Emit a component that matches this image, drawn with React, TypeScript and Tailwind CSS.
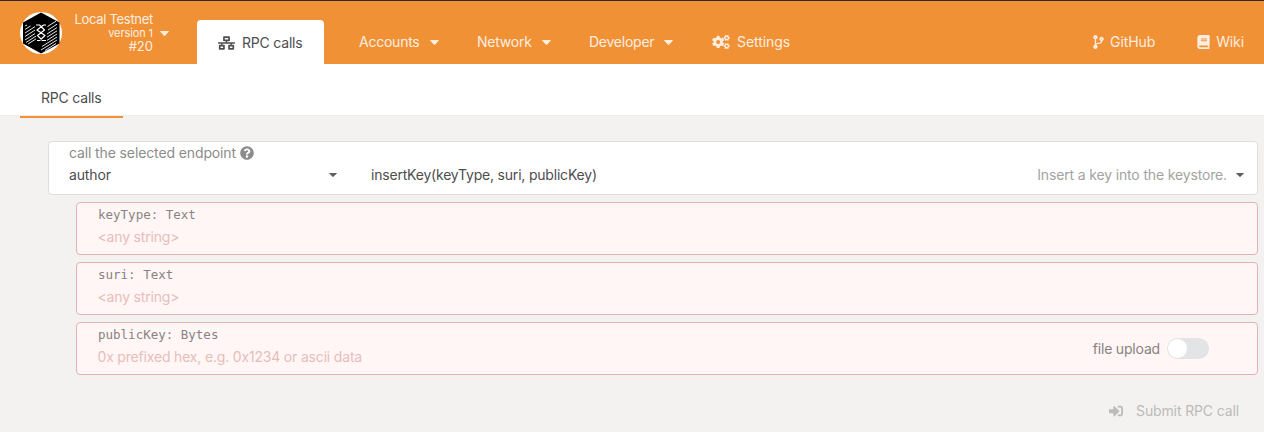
import React from 'react';
import {
  FaBook,
  FaCodeBranch,
  FaCogs,
  FaNetworkWired,
  FaQuestionCircle,
  FaSignInAlt,
} from 'react-icons/fa';

function Caret({ className }: { className: string }) {
  return (
    <svg viewBox="0 0 10 5" preserveAspectRatio="none" className={className} fill="currentColor">
      <path d="M.6 0h8.8q.8.1.3.7L5.5 4.7q-.5.5-1 0L.3.7Q-.2.1.6 0z" />
    </svg>
  );
}

function Logo() {
  return (
    <svg viewBox="0 0 42 42" className="h-[42px] w-[42px] shrink-0">
      <circle cx="21" cy="21" r="21" fill="#fff" />
      <path d="M21 .5 39.500 10.500v21L21 41.500 3 31.500v-21z" fill="#000" />
      <path
        d="M5 14l2-1M5 17.500l5.500-3.500M5 21l10-6.400M5 24.500l10-6.400M5 28l10-6.400M6 30.500l10-6.400M8 32l8-5.100M27.500 14.500l8.500-5.300M28 18l9-5.800M27 22l10-6.400M27 25.200l10-6.400M27 28.400l10-6.400M22 34.500l15-9.500M21 38l16-10M25 38.500l11-7"
        stroke="#fff"
        strokeWidth=".9"
        fill="none"
      />
      <path
        d="M16 13h3.500l5 5-7 5.500 5 5h3.500M26 13h-2.500l-6.500 5 8 5.500-5.500 5H17"
        stroke="#fff"
        strokeWidth="1.200"
        strokeLinejoin="round"
        fill="none"
      />
    </svg>
  );
}

function Menu({ label, className }: { label: string; className: string }) {
  return (
    <div className={`flex shrink-0 items-center gap-[10px] ${className}`}>
      <span className="tracking-[-0.24px]">{label}</span>
      <Caret className="mt-px h-[5px] w-[9px]" />
    </div>
  );
}

function Param({ name, hint, children }: { name: string; hint: string; children?: React.ReactNode }) {
  return (
    <div className="flex h-[53px] items-center justify-between rounded border border-[#e0b4b4] bg-[#fff6f5] pr-12 pl-[20px]">
      <div className="self-start">
        <div className="mt-[2px] ml-px h-[20px] font-['DejaVu_Sans_Mono',monospace] text-[12.500px] leading-[20px] text-[#878382]">
          {name}
        </div>
        <div className="mt-[2px] ml-[0.5px] leading-5 tracking-[-0.18px] text-[#e7bdbc]">{hint}</div>
      </div>
      {children}
    </div>
  );
}

export default function App() {
  return (
    <div className="h-[432px] w-[1264px] overflow-hidden bg-[#f3f2f0] font-[Inter,sans-serif] text-[14px] leading-5 text-[#4e4e4e]">
      <header className="flex h-16 border-t border-[#2c2930] bg-[#f19135] text-[#fdeee1]">
        <div className="flex w-[197px] shrink-0 pt-[11px] pl-5">
          <Logo />
          <div className="w-[91px] text-right text-[13px]">
            <div className="h-[14px] leading-[14px] tracking-[-0.3px]">Local Testnet</div>
            <div className="h-[13px] text-[11px] leading-[15px] tracking-[-0.1px]">version 1</div>
            <div className="leading-[14px]">#20</div>
          </div>
          <Caret className="mt-[19px] ml-[7px] h-[5px] w-[9px]" />
        </div>
        <div className="mt-[19px] flex h-[44px] w-[127px] shrink-0 items-center rounded-t bg-white pt-[2px] pl-[21px] text-[#4e4e4e]">
          <FaNetworkWired className="mr-[7px] h-[14px] w-[17px]" />
          <span className="tracking-[-0.2px]">RPC calls</span>
        </div>
        <nav className="flex flex-1 items-center pt-[19px] pl-[35px]">
          <Menu label="Accounts" className="w-[118px]" />
          <Menu label="Network" className="w-[112px]" />
          <Menu label="Developer" className="w-[123px]" />
          <div className="flex items-center gap-[7px]">
            <FaCogs className="h-[14px] w-[18px]" />
            <span className="tracking-[-0.05px]">Settings</span>
          </div>
          <div className="mr-5 ml-auto flex items-center tracking-[-0.1px]">
            <FaCodeBranch className="mr-[6px] h-[14px] w-[11px]" />
            <span>GitHub</span>
            <FaBook className="mr-[6px] ml-[42px] h-[14px] w-[13px]" />
            <span>Wiki</span>
          </div>
        </nav>
      </header>
      <div className="h-[52px] border-b border-[#ececeb] bg-white pl-5">
        <div className="h-[54px] w-[103px] border-b-2 border-[#f19135] pt-6 pl-[21px] tracking-[-0.2px]">
          RPC calls
        </div>
      </div>
      <main className="pt-[25px] pr-[6px] pl-12">
        <section className="h-[54px] rounded border border-[#dededf] bg-white pl-[20px]">
          <div className="mt-px flex items-center gap-1 text-[#8c8c8c]">
            <span className="tracking-[-0.12px]">call the selected endpoint</span>
            <FaQuestionCircle className="h-[14px] w-[14px]" />
          </div>
          <div className="mt-[2px] flex items-center pr-[13px]">
            <div className="flex w-[302px] items-center justify-between pr-[34px]">
              <span className="tracking-[-0.15px]">author</span>
              <Caret className="h-1 w-2 text-[#5f5f5f]" />
            </div>
            <span className="tracking-[-0.2px]">insertKey(keyType, suri, publicKey)</span>
            <span className="mr-[9px] ml-auto tracking-[-0.15px] text-[#a3a3a3]">
              Insert a key into the keystore.
            </span>
            <Caret className="h-1 w-2 text-[#5f5f5f]" />
          </div>
        </section>
        <div className="mt-[7px] ml-7 flex flex-col gap-[7px]">
          <Param name="keyType: Text" hint="<any string>" />
          <Param name="suri: Text" hint="<any string>" />
          <Param name="publicKey: Bytes" hint="0x prefixed hex, e.g. 0x1234 or ascii data">
            <div className="flex items-center gap-[7px] text-[#878382]">
              <span className="tracking-[-0.18px]">file upload</span>
              <div className="h-[21px] w-[42px] rounded-full bg-[#e2e4e5] p-px">
                <div className="h-[19px] w-[19px] rounded-full bg-white" />
              </div>
            </div>
          </Param>
        </div>
        <div className="mt-[26px] flex items-center justify-end gap-[13px] pr-[19px] text-[#bcbbb9]">
          <FaSignInAlt className="h-[14px] w-[14px]" />
          <span className="tracking-[-0.13px]">Submit RPC call</span>
        </div>
      </main>
    </div>
  );
}
